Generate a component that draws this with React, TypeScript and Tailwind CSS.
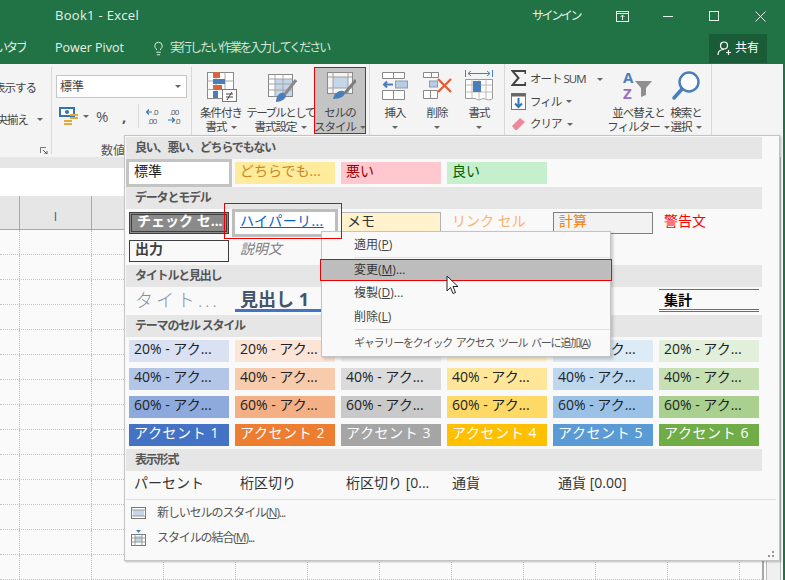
import type { ReactNode } from "react";
import { Lightbulb } from "lucide-react";

function Caret({ className = "" }: { className?: string }) {
  return <span className={`inline-block w-0 h-0 border-x-[3px] border-t-[3px] border-x-transparent border-t-[#666] ${className}`}></span>;
}

function CondIcon() {
  return (
    <svg width="32" height="34" viewBox="0 0 32 34" fill="none">
      <rect x="2.5" y="4.5" width="26" height="26" fill="#fff" stroke="#8a8a8a" />
      <path d="M2.5 13h26M2.5 21.5h26M11 4.5v26M20 4.5v26" stroke="#a8a8a8" />
      <rect x="8" y="4" width="7" height="6" fill="#d9653f" />
      <rect x="8" y="11" width="12" height="5" fill="#4a7ebb" />
      <rect x="8" y="17" width="9" height="5" fill="#d9653f" />
      <rect x="8" y="23" width="5" height="7" fill="#4a7ebb" />
      <rect x="17.5" y="21.5" width="14" height="12" fill="#fff" stroke="#777" />
      <path d="M21 26h7M21 29h7M27 24l-5 8" stroke="#444" />
    </svg>
  );
}

function TableIcon() {
  return (
    <svg width="32" height="34" viewBox="0 0 32 34" fill="none">
      <rect x="3.5" y="6.5" width="24" height="22" fill="#fff" stroke="#888" />
      <rect x="10" y="11" width="17" height="17" fill="#c5d6ea" />
      <path d="M3.5 11h24M3.5 16h24M3.5 22h24M10 6.5v22M18 6.5v22" stroke="#a5a5a5" />
      <path d="M31 12l-11 14" stroke="#8a8a8a" strokeWidth="3" />
      <path d="M11 34c0-5 3-10 8-9 3 1 2 5-1 7-2 1-5 2-7 2z" fill="#4a7ebb" />
    </svg>
  );
}

function CellIcon() {
  return (
    <svg width="32" height="34" viewBox="0 0 32 34" fill="none">
      <rect x="3.5" y="4.5" width="25" height="21" fill="#f4f4f4" stroke="#8a8a8a" />
      <rect x="9" y="9" width="15" height="11" fill="#c5d6ea" />
      <path d="M3.5 9h25M3.5 20h25M9 4.5v21M24 4.5v21" stroke="#a0a0a0" />
      <path d="M32 12L21 25" stroke="#7d7d7d" strokeWidth="3" />
      <path d="M9 31c1-5 5-9 10-8 3 1 2 4-1 6-2 1-6 2-9 2z" fill="#4a7ebb" />
    </svg>
  );
}

function InsertIcon() {
  return (
    <svg width="32" height="34" viewBox="0 0 32 34" fill="none">
      <path d="M3.5 4.5h11v6h-11zM14.5 4.5h11v6h-11zM3.5 22.5h11v9h-11zM14.5 22.5h11v9h-11z" fill="#fff" stroke="#888" />
      <rect x="16.5" y="13" width="12" height="7" fill="#b8cce4" stroke="#8a9db5" />
      <path d="M14 16.5H5M8 13.5l-3 3 3 3" stroke="#4a7ebb" strokeWidth="2" />
    </svg>
  );
}

function DeleteIcon() {
  return (
    <svg width="32" height="34" viewBox="0 0 32 34" fill="none">
      <path d="M2.5 4.5h8v5h-8zM10.5 4.5h7v5h-7zM2.5 22.5h7v8h-7zM9.5 22.5h7v8h-7z" fill="#fff" stroke="#888" />
      <rect x="8.5" y="13" width="8" height="6" fill="#b8cce4" stroke="#8a9db5" />
      <path d="M17 11l13 13M30 11L17 24" stroke="#e0613a" strokeWidth="2.4" />
    </svg>
  );
}

function FormatIcon() {
  return (
    <svg width="32" height="34" viewBox="0 0 32 34" fill="none">
      <path d="M2.5 2v7M29.5 2v7M5 5.5h22M8 3l-3 2.5L8 8M24 3l3 2.5L24 8" stroke="#4a7ebb" />
      <path d="M2.5 11.5h27v19c-4 3-7 0-9 0s-5 3-8 0h-10z" fill="#fff" stroke="#999" />
      <path d="M2.5 17h27M2.5 24h27M9 11.5v19M16 11.5v19M23 11.5v19" stroke="#bbb" />
      <rect x="10" y="13" width="8" height="11" fill="#4a7ebb" />
    </svg>
  );
}

function SortIcon() {
  return (
    <svg width="34" height="34" viewBox="0 0 34 34" fill="none">
      <text x="4" y="15" fontSize="15" fontWeight="700" fill="#4a7ebb">A</text>
      <text x="4" y="31" fontSize="15" fontWeight="700" fill="#9a6fc0">Z</text>
      <path d="M16 13h17l-6 7v7l-5 2v-9z" fill="#8f8f8f" />
    </svg>
  );
}

function SearchIcon() {
  return (
    <svg width="32" height="34" viewBox="0 0 32 34" fill="none">
      <circle cx="19" cy="14" r="9.5" fill="#fff" stroke="#4a7ebb" strokeWidth="2.4" />
      <path d="M12 21L4 30" stroke="#4a7ebb" strokeWidth="3.5" strokeLinecap="round" />
    </svg>
  );
}

function BigButton({ w, icon, lines, active = false }: { w: string; icon: ReactNode; lines: ReactNode[]; active?: boolean }) {
  return (
    <div className={`${w} h-[66px] mt-1 flex flex-col items-center ${active ? "bg-[#c4c4c4]" : ""}`}>
      <div className="h-[38px] flex justify-center">{icon}</div>
      {lines.map((l, i) => (
        <div key={i} className="h-[14px] leading-[14px] whitespace-nowrap flex items-center gap-1">{l}</div>
      ))}
    </div>
  );
}

function SectionHeader({ children }: { children: ReactNode }) {
  return (
    <div className="h-[22px] w-[636px] bg-[#e6e6e6] pl-[9px] flex items-center text-[12px] font-bold tracking-[-1.2px] text-[#555]">{children}</div>
  );
}

function Cell({ className = "", children }: { className?: string; children?: ReactNode }) {
  return (
    <div className={`h-[22px] w-[100px] pl-[5px] pb-[5px] flex items-center whitespace-nowrap text-[14px] ${className}`}>{children}</div>
  );
}

const themeRows = [
  { label: "20% - アク...", colors: ["bg-[#d9e1f2]", "bg-[#fce4d6]", "bg-[#ededed]", "bg-[#fff2cc]", "bg-[#ddebf7]", "bg-[#e2efda]"], hidden: [2, 3] },
  { label: "40% - アク...", colors: ["bg-[#b4c6e7]", "bg-[#f8cbad]", "bg-[#dbdbdb]", "bg-[#ffe699]", "bg-[#bdd7ee]", "bg-[#c6e0b4]"], hidden: [] },
  { label: "60% - アク...", colors: ["bg-[#8ea9db]", "bg-[#f4b084]", "bg-[#c9c9c9]", "bg-[#ffd966]", "bg-[#9bc2e6]", "bg-[#a9d08e]"], hidden: [] },
];
const accents = ["bg-[#4472c4]", "bg-[#ed7d31]", "bg-[#a5a5a5]", "bg-[#ffc000]", "bg-[#5b9bd5]", "bg-[#70ad47]"];

function StylePanel() {
  return (
    <div className="absolute left-[124px] top-[135px] w-[656px] h-[426px] bg-[#f9f9f9] border border-[#c4c4c4] pl-px pt-px shadow-[1px_1px_2px_rgba(0,0,0,0.25)] text-[#333]">
      <SectionHeader>良い、悪い、どちらでもない</SectionHeader>
      <div className="grid grid-cols-[repeat(6,100px)] gap-[6px] pl-[3px] py-[3px]">
        <Cell className="bg-white text-[#222] outline-[3px] outline-solid outline-[#c4c4c4]">標準</Cell>
        <Cell className="bg-[#ffeb9c] text-[#c9871c]">どちらでも...</Cell>
        <Cell className="bg-[#ffc7ce] text-[#9c0006]">悪い</Cell>
        <Cell className="bg-[#c6efce] text-[#006100]">良い</Cell>
      </div>
      <SectionHeader>データとモデル</SectionHeader>
      <div className="grid grid-cols-[repeat(6,100px)] gap-[6px] pl-[3px] pt-[3px] pb-[3px]">
        <Cell className="bg-[#8a8a8a] border-[3px] border-double border-[#3f3f3f] pl-[3px] pb-[2px] text-white font-bold">チェック セ...</Cell>
        <Cell className="bg-white outline-[3px] outline-solid outline-[#bdbdbd] text-[#0563c1] underline tracking-[0.4px] pl-[4px]">ハイパーリ...</Cell>
        <Cell className="bg-[#fff2cc] border border-[#b2b2b2] pl-[4px] pb-[3px] text-[#333]">メモ</Cell>
        <Cell className="text-[#f9b36a]">リンク セル</Cell>
        <Cell className="bg-[#f2f2f2] border border-[#7f7f7f] pl-[4px] pb-[3px] text-[#fa7d00]">計算</Cell>
        <Cell className="text-[#ff0000]">警告文</Cell>
        <Cell className="border border-[#3f3f3f] pl-[4px] pb-[3px] font-bold text-[#3f3f3f]">出力</Cell>
        <Cell className="italic text-[#7f7f7f]">説明文</Cell>
      </div>
      <SectionHeader>タイトルと見出し</SectionHeader>
      <div className="grid grid-cols-[repeat(6,100px)] gap-[6px] pl-[3px] pt-[2px] pb-[3px]">
        <div className="h-[23px] w-[100px] pl-[6px] flex items-center whitespace-nowrap text-[18px] font-light tracking-[3px] text-[#8590a2]">タイト...</div>
        <div className="h-[23px] w-[100px] pl-[5px] flex items-center whitespace-nowrap text-[18px] font-bold text-[#44546a] border-b-[3px] border-[#4472c4]">見出し 1</div>
        <div className="h-[23px] w-[100px] border-b-[3px] border-[#a2b8e1]"></div>
        <div className="h-[23px] w-[100px] border-b-2 border-[#8ea9db]"></div>
        <div className="h-[23px] w-[100px] pl-[6px] flex items-center whitespace-nowrap text-[13px] font-bold text-[#44546a]">見出し 4</div>
        <div className="h-[23px] w-[100px] pl-[5px] flex items-center whitespace-nowrap text-[14px] font-bold text-black border-t border-b-[3px] border-double border-[#4472c4]">集計</div>
      </div>
      <SectionHeader>テーマのセル スタイル</SectionHeader>
      <div className="grid grid-cols-[repeat(6,100px)] gap-[6px] pl-[3px] py-[3px]">
        {themeRows.map((row) =>
          row.colors.map((c, i) => (
            <Cell key={row.label + c} className={`${c} text-[#222]`}>{(row.hidden as number[]).includes(i) ? "" : row.label}</Cell>
          ))
        )}
        {accents.map((c, i) => (
          <Cell key={c} className={`${c} text-white tracking-[0.6px]`}>アクセント {i + 1}</Cell>
        ))}
      </div>
      <SectionHeader>表示形式</SectionHeader>
      <div className="grid grid-cols-[repeat(6,100px)] gap-[6px] pl-[3px] pt-[3px] pb-[3px] text-[#333]">
        <Cell>パーセント</Cell>
        <Cell>桁区切り</Cell>
        <Cell>桁区切り [0...</Cell>
        <Cell>通貨</Cell>
        <Cell>通貨 [0.00]</Cell>
      </div>
      <div className="w-[650px] h-px bg-[#e0e0e0]"></div>
      <div className="flex flex-col pl-[5px] text-[12px] tracking-[-1.1px] text-[#555]">
        <div className="h-[25px] flex items-center gap-[11px]">
          <svg width="15" height="12" viewBox="0 0 15 12" fill="none">
            <rect x="0.5" y="0.5" width="14" height="11" fill="#fff" stroke="#777" />
            <rect x="2" y="3" width="11" height="6" fill="#c5d6ea" />
            <path d="M0.5 3h14M0.5 9h14" stroke="#999" />
          </svg>
          <span>新しいセルのスタイル(<span className="underline">N</span>)...</span>
        </div>
        <div className="h-[25px] flex items-center gap-[11px]">
          <svg width="15" height="16" viewBox="0 0 15 16" fill="none">
            <path d="M5 0h5L7.5 3z" fill="#4a7ebb" />
            <rect x="0.5" y="4.5" width="14" height="11" fill="#fff" stroke="#777" />
            <rect x="4" y="6" width="7" height="6" fill="#c5d6ea" />
            <path d="M0.5 8h14M0.5 12h14M4 4.5v11M11 4.5v11" stroke="#999" />
          </svg>
          <span>スタイルの結合(<span className="underline">M</span>)...</span>
        </div>
      </div>
      {/* Resize grip */}
      <div className="absolute right-[5px] bottom-[3px] grid grid-cols-2 gap-[2px]">
        <span></span>
        <span className="w-[2px] h-[2px] bg-[#999]"></span>
        <span className="w-[2px] h-[2px] bg-[#999]"></span>
        <span className="w-[2px] h-[2px] bg-[#999]"></span>
      </div>
    </div>
  );
}

function ContextMenu() {
  const Item = ({ text, letter, tail = "" }: { text: string; letter: string; tail?: string }) => (
    <div className="h-[24px] pl-[32px] flex items-center text-[12px] text-[#444]">
      <span>{text}(<span className="underline">{letter}</span>){tail}</span>
    </div>
  );
  return (
    <div className="absolute left-[321px] top-[231px] w-[290px] h-[126px] bg-[#f9f9f9] border border-[#c4c4c4] shadow-[2px_2px_3px_rgba(0,0,0,0.2)] flex flex-col">
      <div className="pt-[1px]"><Item text="適用" letter="P" /></div>
      <div className="ml-[32px] h-px bg-[#e2e2e2] mb-[2px]"></div>
      <div className="h-[20px] bg-[#bdbdbd] flex items-center pl-[32px] text-[12px] text-[#333]">
        <span>変更(<span className="underline">M</span>)...</span>
      </div>
      <div className="pt-[1px]"><Item text="複製" letter="D" tail="..." /></div>
      <Item text="削除" letter="L" />
      <div className="ml-[32px] h-px bg-[#e2e2e2] mt-[1px]"></div>
      <div className="h-[26px] pl-[32px] flex items-center text-[11px] tracking-[-1.2px] [word-spacing:2px] text-[#555] whitespace-nowrap">
        <span>ギャラリーをクイック アクセス ツール バーに追加(<span className="underline">A</span>)</span>
      </div>
    </div>
  );
}

function Ribbon() {
  const label = "text-[11.5px] tracking-[-1px] text-[#444]";
  return (
    <div className={`h-[93px] bg-[#f4f4f4] flex ${label}`}>
      {/* Alignment (cut off) */}
      <div className="relative w-[52px] border-r border-[#d8d8d8] overflow-hidden my-[3px]">
        <div className="mt-[12px] pr-[15px] flex justify-end whitespace-nowrap">全体を表示する</div>
        <div className="mt-[15px] flex justify-end items-center whitespace-nowrap pr-[8px]">
          <span className="mr-[9px]">中央揃え</span><Caret />
        </div>
        <svg className="absolute left-[40px] top-[80px]" width="8" height="8" viewBox="0 0 8 8" fill="none">
          <path d="M0.5 6V0.5H6" stroke="#777" />
          <path d="M3 3l4 4M7 4v3H4" stroke="#555" />
        </svg>
      </div>
      {/* Number */}
      <div className="w-[140px] border-r border-[#d8d8d8] my-[3px] pl-[4px]">
        <div className="w-[131px] h-[23px] mt-[8px] bg-white border border-[#c6c6c6] flex items-center justify-between pl-[3px] pr-[5px] text-[12px] tracking-normal">
          標準<Caret />
        </div>
        <div className="flex items-center mt-[6px] h-[24px]">
          <svg className="ml-[3px]" width="21" height="19" viewBox="0 0 21 19" fill="none">
            <rect x="1" y="1" width="14" height="8" fill="#fff" stroke="#2f75b5" strokeWidth="2" />
            <circle cx="8" cy="5" r="2" fill="#2f75b5" />
            <path d="M11 8h8M11 11h8M5 14h8M5 17h8" stroke="#e2a93b" strokeWidth="2" />
          </svg>
          <Caret className="ml-[3px]" />
          <span className="ml-[7px] w-[14px] text-[15px] tracking-normal text-[#555]">%</span>
          <span className="ml-[12px] w-[6px] text-[15px] font-bold tracking-normal text-[#555]">,</span>
          <span className="ml-[10px] w-px h-[24px] bg-[#d8d8d8]"></span>
          <svg className="ml-[7px]" width="15" height="18" viewBox="0 0 15 18" fill="none">
            <path d="M6 5H0.5M3 2.5L0.5 5 3 7.5" stroke="#2f75b5" strokeWidth="1.2" />
            <text x="7" y="8" fontSize="8" fill="#555">.0</text>
            <text x="2" y="17" fontSize="8" fill="#555">.00</text>
          </svg>
          <svg className="ml-[7px]" width="15" height="18" viewBox="0 0 15 18" fill="none">
            <text x="2" y="8" fontSize="8" fill="#555">.00</text>
            <path d="M0 13h6M4 10.5L6.5 13 4 15.5" stroke="#2f75b5" strokeWidth="1.2" />
            <text x="7" y="17" fontSize="8" fill="#555">.0</text>
          </svg>
        </div>
        <div className="mt-[14px] pl-[45px] text-[12px] tracking-normal text-[#555] whitespace-nowrap">数値</div>
      </div>
      {/* Styles */}
      <div className="w-[178px] border-r border-[#d8d8d8] mb-[3px] pl-[4px] flex">
        <BigButton w="w-[50px]" icon={<CondIcon />} lines={["条件付き", <>書式<Caret /></>]} />
        <BigButton w="w-[69px]" icon={<TableIcon />} lines={[<span className="tracking-[-1.6px]">テーブルとして</span>, <>書式設定<Caret /></>]} />
        <BigButton active w="w-[50px]" icon={<CellIcon />} lines={["セルの", <>スタイル<Caret /></>]} />
      </div>
      {/* Cells */}
      <div className="w-[135px] border-r border-[#d8d8d8] mb-[3px] pl-[4px] flex">
        <BigButton w="w-[42px]" icon={<InsertIcon />} lines={["挿入", <Caret />]} />
        <BigButton w="w-[42px]" icon={<DeleteIcon />} lines={["削除", <Caret />]} />
        <BigButton w="w-[42px]" icon={<FormatIcon />} lines={["書式", <Caret />]} />
      </div>
      {/* Editing */}
      <div className="w-[207px] border-r border-[#d8d8d8] mb-[3px] pl-[6px] flex">
        <div className="w-[100px] flex flex-col pt-[4px]">
          <div className="h-[22px] flex items-center">
            <svg className="mr-[4px] mb-[3px]" width="15" height="16" viewBox="0 0 15 16" fill="none">
              <path d="M14.5 4V1H1.5l6 7-6 7h13v-3" stroke="#444" strokeWidth="2" />
            </svg>
            <span>オート SUM</span>
            <Caret className="ml-[11px]" />
          </div>
          <div className="h-[23px] flex items-center">
            <svg className="mr-[4px]" width="15" height="17" viewBox="0 0 15 17" fill="none">
              <rect x="0.5" y="0.5" width="14" height="16" fill="#fff" stroke="#777" />
              <rect x="0.5" y="0.5" width="14" height="3" fill="#666" />
              <path d="M7.5 5v9M4 10.5l3.5 3.5 3.5-3.5" stroke="#2f75b5" strokeWidth="2" />
            </svg>
            <span>フィル</span>
            <Caret className="ml-[5px]" />
          </div>
          <div className="h-[22px] flex items-center">
            <svg className="mr-[4px]" width="15" height="14" viewBox="0 0 15 14" fill="none">
              <path d="M1 9l8-8 5 4-8 8H4z" fill="#ec8a9a" />
            </svg>
            <span>クリア</span>
            <Caret className="ml-[5px]" />
          </div>
        </div>
        <BigButton
          w="w-[50px]"
          icon={<SortIcon />}
          lines={[<span className="ml-[5px]">並べ替えと</span>, <span className="ml-[5px] flex items-center gap-1">フィルター<Caret /></span>]}
        />
        <BigButton w="w-[50px]" icon={<SearchIcon />} lines={["検索と", <>選択<Caret /></>]} />
      </div>
    </div>
  );
}

function Sheet() {
  const cols = Array.from({ length: 10 });
  const rows = Array.from({ length: 14 });
  return (
    <div className="flex flex-1 bg-[#fafafa] overflow-hidden">
      <div className="w-[762px] flex flex-col">
        <div className="h-[11px] bg-[#e6e6e6]"></div>
        <div className="h-[30px] bg-white"></div>
        <div className="h-[35px] bg-[#e6e6e6] border-b border-[#a8a8a8] flex">
          <div className="w-[20px] border-r border-[#a8a8a8]"></div>
          {cols.map((_, i) => (
            <div key={i} className="w-[72px] border-r border-[#a8a8a8] flex justify-center items-end pb-[3px] text-[12px] text-[#2d5c78]">{i === 0 ? "I" : ""}</div>
          ))}
        </div>
        {rows.map((_, r) => (
          <div key={r} className="h-[25px] shrink-0 border-b border-dotted border-[#c4c4c4] flex">
            <div className="w-[20px] border-r border-dotted border-[#a9c3d8]"></div>
            {cols.map((_, i) => (
              <div key={i} className="w-[72px] border-r border-dotted border-[#a9c3d8]"></div>
            ))}
          </div>
        ))}
      </div>
      <div className="w-[21px] border-l-2 border-[#a8a8a8]">
        <div className="ml-[2px] h-full w-[15px] border-x border-[#bdbdbd] bg-[#f0f0f0]"></div>
      </div>
    </div>
  );
}

export default function App() {
  return (
    <div className="relative w-[785px] h-[580px] overflow-hidden bg-[#217346] pr-[2px] font-['Open_Sans','Noto_Sans_CJK_JP',sans-serif]">
      <div className="h-full flex flex-col">
        {/* Title bar */}
        <div className="h-[32px] shrink-0 flex items-center text-[12px] text-[#e8f0ea]">
          <span className="ml-[55px] text-[13px] tracking-[0.3px]">Book1 - Excel</span>
          <span className="ml-auto mr-[19px] tracking-[-2.4px]">サインイン</span>
          <div className="w-[46px] flex justify-center">
            <svg width="13" height="11" viewBox="0 0 13 11" fill="none" stroke="#e8f0ea">
              <rect x="0.5" y="0.5" width="12" height="10" />
              <path d="M0.5 2.5h12M6.5 9V4.5M4.5 6l2-2 2 2" />
            </svg>
          </div>
          <div className="w-[46px] flex justify-center"><span className="w-[10px] h-px bg-[#e8f0ea]"></span></div>
          <div className="w-[46px] flex justify-center"><span className="w-[10px] h-[10px] border border-[#e8f0ea]"></span></div>
          <div className="w-[46px] flex justify-center">
            <svg width="11" height="11" viewBox="0 0 11 11" fill="none" stroke="#e8f0ea"><path d="M0.5 0.5l10 10M10.5 0.5l-10 10" /></svg>
          </div>
        </div>
        {/* Tabs row */}
        <div className="h-[32px] shrink-0 flex items-center text-[12px] text-[#e8f0ea]">
          <div className="w-[26px] overflow-hidden flex justify-end whitespace-nowrap tracking-[-2px]">新しいタブ</div>
          <span className="ml-[29px] text-[12.5px]">Power Pivot</span>
          <Lightbulb size={15} strokeWidth={1.5} className="ml-[27px]" />
          <span className="ml-[4px] tracking-[-2px] text-[#d6e5da]">実行したい作業を入力してください</span>
          <div className="ml-auto mr-[16px] w-[58px] h-[29px] bg-[#1a5c38] flex items-center justify-center gap-[3px] text-white">
            <svg width="15" height="15" viewBox="0 0 15 15" fill="none" stroke="#fff" strokeWidth="1.2">
              <circle cx="7" cy="4.5" r="3.5" />
              <path d="M1 14c0-3 2-5.5 6-5.5M11.5 9v5M9 11.5h5" />
            </svg>
            <span>共有</span>
          </div>
        </div>
        <Ribbon />
        <Sheet />
      </div>

      <StylePanel />
      <ContextMenu />

      {/* Red annotation boxes */}
      <div className="absolute left-[224px] top-[203px] w-[118px] h-[36px] border border-[#ee0000]"></div>
      <div className="absolute left-[320px] top-[259px] w-[292px] h-[22px] border border-[#ee0000]"></div>
      <div className="absolute left-[314px] top-[67px] w-[52px] h-[67px] border border-[#ee0000]"></div>

      {/* Mouse pointer */}
      <svg className="absolute left-[446px] top-[275px]" width="13" height="20" viewBox="0 0 13 20">
        <path d="M1 1v15l3.5-3.5 2.5 6 2.5-1-2.5-6H12z" fill="#fff" stroke="#222" />
      </svg>
    </div>
  );
}
